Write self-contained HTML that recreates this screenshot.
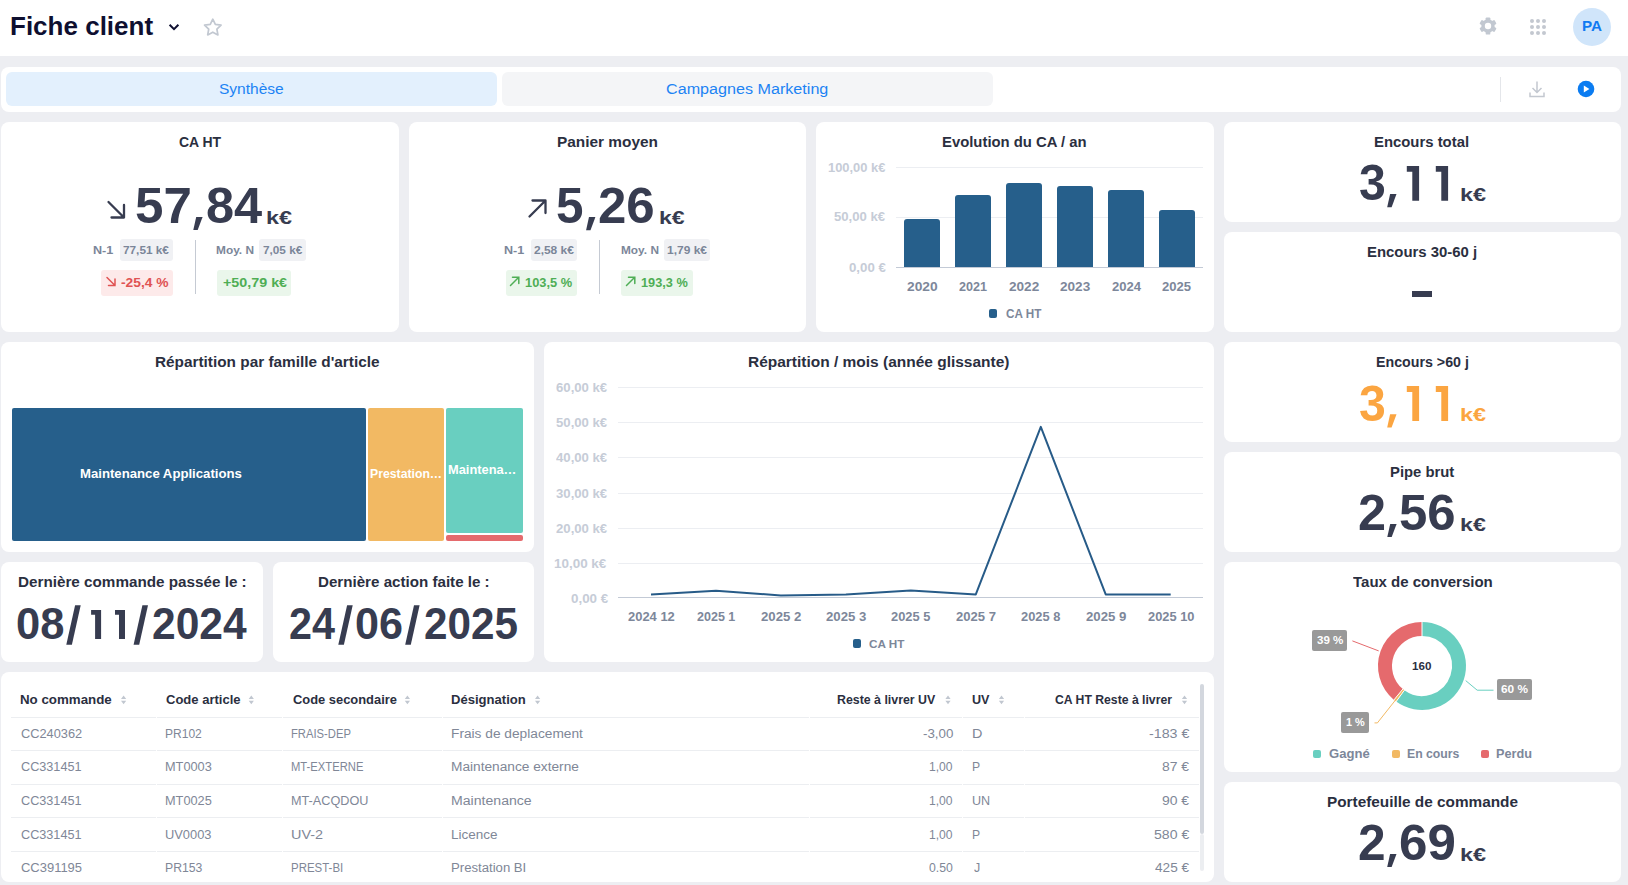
<!DOCTYPE html>
<html><head><meta charset="utf-8"><style>
html,body{margin:0;padding:0}
body{width:1628px;height:885px;background:#edeef2;position:relative;overflow:hidden;font-family:"Liberation Sans",sans-serif}
</style></head><body>
<div style="position:absolute;left:0px;top:0px;width:1628px;height:56px;background:#fff;border-radius:0px;"></div><svg style="position:absolute;left:168px;top:22px" width="12" height="10"><polyline points="1.6,2.8 6,7.2 10.4,2.8" fill="none" stroke="#0e0f30" stroke-width="2"/></svg><svg style="position:absolute;left:0;top:0" width="240" height="56"><polygon points="212.80,19.20 215.33,24.42 221.07,25.21 216.89,29.23 217.91,34.94 212.80,32.20 207.69,34.94 208.71,29.23 204.53,25.21 210.27,24.42" fill="none" stroke="#c2c8d1" stroke-width="1.7" stroke-linejoin="round"/></svg><svg style="position:absolute;left:1478px;top:16.4px" width="20" height="20"><g transform="translate(10 10)" fill="#c2c8d1"><circle r="6.7"/><rect x="-2.3" y="-8.6" width="4.6" height="5" rx="0.9" transform="rotate(0)"/><rect x="-2.3" y="-8.6" width="4.6" height="5" rx="0.9" transform="rotate(60)"/><rect x="-2.3" y="-8.6" width="4.6" height="5" rx="0.9" transform="rotate(120)"/><rect x="-2.3" y="-8.6" width="4.6" height="5" rx="0.9" transform="rotate(180)"/><rect x="-2.3" y="-8.6" width="4.6" height="5" rx="0.9" transform="rotate(240)"/><rect x="-2.3" y="-8.6" width="4.6" height="5" rx="0.9" transform="rotate(300)"/><circle r="3.2" fill="#fff"/></g></svg><div style="position:absolute;left:1530.0px;top:19.0px;width:4.4px;height:4.4px;background:#c3c8d0;border-radius:2.2px;"></div><div style="position:absolute;left:1530.0px;top:24.9px;width:4.4px;height:4.4px;background:#c3c8d0;border-radius:2.2px;"></div><div style="position:absolute;left:1530.0px;top:30.8px;width:4.4px;height:4.4px;background:#c3c8d0;border-radius:2.2px;"></div><div style="position:absolute;left:1535.9px;top:19.0px;width:4.4px;height:4.4px;background:#c3c8d0;border-radius:2.2px;"></div><div style="position:absolute;left:1535.9px;top:24.9px;width:4.4px;height:4.4px;background:#c3c8d0;border-radius:2.2px;"></div><div style="position:absolute;left:1535.9px;top:30.8px;width:4.4px;height:4.4px;background:#c3c8d0;border-radius:2.2px;"></div><div style="position:absolute;left:1541.8px;top:19.0px;width:4.4px;height:4.4px;background:#c3c8d0;border-radius:2.2px;"></div><div style="position:absolute;left:1541.8px;top:24.9px;width:4.4px;height:4.4px;background:#c3c8d0;border-radius:2.2px;"></div><div style="position:absolute;left:1541.8px;top:30.8px;width:4.4px;height:4.4px;background:#c3c8d0;border-radius:2.2px;"></div><div style="position:absolute;left:1573px;top:8px;width:38px;height:38px;background:#d0e5fa;border-radius:19px;"></div><div style="position:absolute;left:1px;top:67px;width:1620px;height:45px;background:#fff;border-radius:8px;"></div><div style="position:absolute;left:6px;top:72px;width:491px;height:34px;background:#e3f0fd;border-radius:6px;"></div><div style="position:absolute;left:502px;top:72px;width:491px;height:34px;background:#f4f5f7;border-radius:6px;"></div><div style="position:absolute;left:1500px;top:77px;width:1px;height:25px;background:#e4e6ea;border-radius:0px;"></div><svg style="position:absolute;left:1527px;top:79px" width="20" height="20"><path d="M10 2.5v11M5.5 9l4.5 4.5L14.5 9M3 13.5v4h14v-4" fill="none" stroke="#c3c8d0" stroke-width="1.5"/></svg><svg style="position:absolute;left:1576px;top:79px" width="20" height="20"><circle cx="10" cy="10" r="8.3" fill="#0b7cf1"/><path d="M7.8 6.4v7.2l5.6-3.6z" fill="#fff"/></svg><div style="position:absolute;left:1px;top:122px;width:398px;height:210px;background:#fff;border-radius:8px;"></div><div style="position:absolute;left:409px;top:122px;width:397px;height:210px;background:#fff;border-radius:8px;"></div><div style="position:absolute;left:816px;top:122px;width:398px;height:210px;background:#fff;border-radius:8px;"></div><div style="position:absolute;left:1224px;top:122px;width:397px;height:100px;background:#fff;border-radius:8px;"></div><div style="position:absolute;left:1224px;top:232px;width:397px;height:100px;background:#fff;border-radius:8px;"></div><div style="position:absolute;left:1224px;top:342px;width:397px;height:100px;background:#fff;border-radius:8px;"></div><div style="position:absolute;left:1224px;top:452px;width:397px;height:100px;background:#fff;border-radius:8px;"></div><div style="position:absolute;left:1224px;top:562px;width:397px;height:210px;background:#fff;border-radius:8px;"></div><div style="position:absolute;left:1224px;top:782px;width:397px;height:100px;background:#fff;border-radius:8px;"></div><div style="position:absolute;left:1px;top:342px;width:533px;height:210px;background:#fff;border-radius:8px;"></div><div style="position:absolute;left:544px;top:342px;width:670px;height:320px;background:#fff;border-radius:8px;"></div><div style="position:absolute;left:1px;top:562px;width:262px;height:100px;background:#fff;border-radius:8px;"></div><div style="position:absolute;left:273px;top:562px;width:261px;height:100px;background:#fff;border-radius:8px;"></div><div style="position:absolute;left:1px;top:672px;width:1213px;height:210px;background:#fff;border-radius:8px;"></div><svg style="position:absolute;left:100px;top:194px" width="32" height="30"><path d="M8.5 8 L24 23.5 M24 11 V23.5 H11.5" fill="none" stroke="#373c50" stroke-width="2.3" stroke-linecap="round" stroke-linejoin="round"/></svg><svg style="position:absolute;left:0;top:0;overflow:visible" width="1628" height="885"><polygon points="196.20,216.90 202.60,216.90 197.70,230.00 193.30,230.00" fill="#373c50"/></svg><div style="position:absolute;left:120px;top:239px;width:53px;height:21.6px;background:#f0f1f4;border-radius:3px;"></div><div style="position:absolute;left:195px;top:240px;width:1px;height:54px;background:#c5cad3;border-radius:0px;"></div><div style="position:absolute;left:259px;top:239px;width:47px;height:21.6px;background:#f0f1f4;border-radius:3px;"></div><div style="position:absolute;left:101px;top:270px;width:72px;height:25.7px;background:#fdeaea;border-radius:3px;"></div><svg style="position:absolute;left:100px;top:272px" width="20" height="20"><path d="M7 5.5 L15 13.5 M15 7 V13.5 H8.5" fill="none" stroke="#e05353" stroke-width="1.5" stroke-linecap="round"/></svg><div style="position:absolute;left:217px;top:270px;width:74px;height:25.7px;background:#eaf6eb;border-radius:3px;"></div><svg style="position:absolute;left:522px;top:194px" width="32" height="30"><path d="M7.5 22.5 L23 7 M10.5 6.5 H23.5 V19" fill="none" stroke="#373c50" stroke-width="2.3" stroke-linecap="round" stroke-linejoin="round"/></svg><svg style="position:absolute;left:0;top:0;overflow:visible" width="1628" height="885"><polygon points="589.00,217.10 595.40,217.10 590.50,230.20 586.10,230.20" fill="#373c50"/></svg><div style="position:absolute;left:531px;top:239px;width:46px;height:21.6px;background:#f0f1f4;border-radius:3px;"></div><div style="position:absolute;left:599px;top:240px;width:1px;height:54px;background:#c5cad3;border-radius:0px;"></div><div style="position:absolute;left:664px;top:239px;width:46px;height:21.6px;background:#f0f1f4;border-radius:3px;"></div><div style="position:absolute;left:506px;top:270px;width:71px;height:25.5px;background:#eaf6eb;border-radius:3px;"></div><svg style="position:absolute;left:505px;top:272px" width="20" height="20"><path d="M5.5 13.5 L13.5 5.5 M7.5 5.3 H13.8 V11.5" fill="none" stroke="#4fae55" stroke-width="1.5" stroke-linecap="round"/></svg><div style="position:absolute;left:621px;top:270px;width:72px;height:25.5px;background:#eaf6eb;border-radius:3px;"></div><svg style="position:absolute;left:620.7px;top:272px" width="20" height="20"><path d="M5.5 13.5 L13.5 5.5 M7.5 5.3 H13.8 V11.5" fill="none" stroke="#4fae55" stroke-width="1.5" stroke-linecap="round"/></svg><div style="position:absolute;left:896px;top:167px;width:307px;height:1px;background:#eceef2;border-radius:0px;"></div><div style="position:absolute;left:896px;top:217px;width:307px;height:1px;background:#eceef2;border-radius:0px;"></div><div style="position:absolute;left:896px;top:267px;width:307px;height:1px;background:#c3cad6;border-radius:0px;"></div><div style="position:absolute;left:904.2px;top:219px;width:35.7px;height:48.19999999999999px;background:#265f8b;border-radius:3px 3px 0 0px;"></div><div style="position:absolute;left:955px;top:195px;width:35.7px;height:72.19999999999999px;background:#265f8b;border-radius:3px 3px 0 0px;"></div><div style="position:absolute;left:1006px;top:183.1px;width:35.7px;height:84.1px;background:#265f8b;border-radius:3px 3px 0 0px;"></div><div style="position:absolute;left:1057px;top:186px;width:35.7px;height:81.19999999999999px;background:#265f8b;border-radius:3px 3px 0 0px;"></div><div style="position:absolute;left:1108px;top:190px;width:35.7px;height:77.19999999999999px;background:#265f8b;border-radius:3px 3px 0 0px;"></div><div style="position:absolute;left:1159.1px;top:210px;width:35.7px;height:57.19999999999999px;background:#265f8b;border-radius:3px 3px 0 0px;"></div><div style="position:absolute;left:988.5px;top:309.3px;width:8.5px;height:8.9px;background:#265f8b;border-radius:2px;"></div><svg style="position:absolute;left:0;top:0;overflow:visible" width="1628" height="885"><polygon points="1390.10,194.10 1396.50,194.10 1391.60,207.20 1387.20,207.20" fill="#373c50"/></svg><svg style="position:absolute;left:0;top:0" width="1628" height="885"><polygon points="1406.8,165.9 1419.1,165.9 1419.1,200.8 1412.3,200.8 1412.3,171.70000000000002 1406.8,171.70000000000002" fill="#373c50"/><polygon points="1435.8,165.9 1448.1,165.9 1448.1,200.8 1441.3,200.8 1441.3,171.70000000000002 1435.8,171.70000000000002" fill="#373c50"/></svg><div style="position:absolute;left:1411.6px;top:291px;width:20.6px;height:5.7px;background:#373c50;border-radius:0px;"></div><svg style="position:absolute;left:0;top:0;overflow:visible" width="1628" height="885"><polygon points="1390.10,414.30 1396.50,414.30 1391.60,427.40 1387.20,427.40" fill="#fba541"/></svg><svg style="position:absolute;left:0;top:0" width="1628" height="885"><polygon points="1406.8,386.1 1419.1,386.1 1419.1,421.0 1412.3,421.0 1412.3,391.90000000000003 1406.8,391.90000000000003" fill="#fba541"/><polygon points="1435.8,386.1 1448.1,386.1 1448.1,421.0 1441.3,421.0 1441.3,391.90000000000003 1435.8,391.90000000000003" fill="#fba541"/></svg><svg style="position:absolute;left:0;top:0;overflow:visible" width="1628" height="885"><polygon points="1390.20,523.90 1396.60,523.90 1391.70,537.00 1387.30,537.00" fill="#373c50"/></svg><svg style="position:absolute;left:0;top:0;overflow:visible" width="1628" height="885"><polygon points="1390.10,853.90 1396.50,853.90 1391.60,867.00 1387.20,867.00" fill="#373c50"/></svg><div style="position:absolute;left:12px;top:408px;width:354.2px;height:133px;background:#265f8b;border-radius:2px;"></div><div style="position:absolute;left:368.3px;top:408px;width:76px;height:133px;background:#f2b963;border-radius:2px;"></div><div style="position:absolute;left:446px;top:408px;width:77px;height:124.5px;background:#69cfc0;border-radius:2px;"></div><div style="position:absolute;left:446px;top:534.5px;width:77px;height:6.5px;background:#e56a6d;border-radius:2px;"></div><svg style="position:absolute;left:0;top:0;overflow:visible" width="1628" height="885"><polygon points="75.10,605.20 80.70,605.20 71.90,644.70 66.30,644.70" fill="#373c50"/></svg><svg style="position:absolute;left:0;top:0;overflow:visible" width="1628" height="885"><polygon points="91.10,609.90 101.10,609.90 101.10,639.10 95.10,639.10 95.10,614.70 91.10,614.70" fill="#373c50"/></svg><svg style="position:absolute;left:0;top:0;overflow:visible" width="1628" height="885"><polygon points="115.00,609.90 125.00,609.90 125.00,639.10 119.00,639.10 119.00,614.70 115.00,614.70" fill="#373c50"/></svg><svg style="position:absolute;left:0;top:0;overflow:visible" width="1628" height="885"><polygon points="142.40,605.20 148.00,605.20 139.20,644.70 133.60,644.70" fill="#373c50"/></svg><svg style="position:absolute;left:0;top:0;overflow:visible" width="1628" height="885"><polygon points="347.10,605.20 352.70,605.20 343.90,644.70 338.30,644.70" fill="#373c50"/></svg><svg style="position:absolute;left:0;top:0;overflow:visible" width="1628" height="885"><polygon points="414.00,605.20 419.60,605.20 410.80,644.70 405.20,644.70" fill="#373c50"/></svg><div style="position:absolute;left:618px;top:387px;width:585px;height:1px;background:#eceef2;border-radius:0px;"></div><div style="position:absolute;left:618px;top:422px;width:585px;height:1px;background:#eceef2;border-radius:0px;"></div><div style="position:absolute;left:618px;top:457px;width:585px;height:1px;background:#eceef2;border-radius:0px;"></div><div style="position:absolute;left:618px;top:493px;width:585px;height:1px;background:#eceef2;border-radius:0px;"></div><div style="position:absolute;left:618px;top:528px;width:585px;height:1px;background:#eceef2;border-radius:0px;"></div><div style="position:absolute;left:618px;top:563px;width:585px;height:1px;background:#eceef2;border-radius:0px;"></div><div style="position:absolute;left:618px;top:597px;width:585px;height:1px;background:#c3cad6;border-radius:0px;"></div><svg style="position:absolute;left:0;top:0" width="1628" height="885"><polyline points="651.0,594.5 716.0,590.8 780.9,595.4 845.9,594.4 910.8,590.6 975.8,594.4 1040.8,426.9 1105.7,594.4 1170.7,594.4" fill="none" stroke="#275b88" stroke-width="2" stroke-linejoin="round"/></svg><div style="position:absolute;left:852.6px;top:639px;width:8.5px;height:8.5px;background:#265f8b;border-radius:2px;"></div><svg style="position:absolute;left:0;top:0" width="1628" height="885"><path d="M1422.00 629.00 A37 37 0 1 1 1400.25 695.93" fill="none" stroke="#69cfc0" stroke-width="14"/><path d="M1400.25 695.93 A37 37 0 0 1 1398.42 694.51" fill="none" stroke="#f2b963" stroke-width="14"/><path d="M1398.42 694.51 A37 37 0 0 1 1422.00 629.00" fill="none" stroke="#e56a6d" stroke-width="14"/><line x1="1422.00" y1="637.00" x2="1422.00" y2="621.00" stroke="#fff" stroke-width="1"/><line x1="1404.95" y1="689.46" x2="1395.55" y2="702.41" stroke="#fff" stroke-width="1"/><line x1="1403.51" y1="688.34" x2="1393.32" y2="700.67" stroke="#fff" stroke-width="1"/><polyline points="1352.4,640.9 1378.7,650.9" fill="none" stroke="#e56a6d" stroke-width="1"/><polyline points="1465.7,680.6 1477.2,690.2 1493.5,690.2" fill="none" stroke="#69cfc0" stroke-width="1"/><polyline points="1403.3,690.2 1377.4,722.9 1374.5,722.9" fill="none" stroke="#f2b963" stroke-width="1"/></svg><div style="position:absolute;left:1312px;top:630.3px;width:35px;height:21px;background:#999999;border-radius:2px;"></div><div style="position:absolute;left:1497px;top:679.3px;width:35px;height:20.7px;background:#999999;border-radius:2px;"></div><div style="position:absolute;left:1341px;top:712.3px;width:27.7px;height:20.6px;background:#999999;border-radius:2px;"></div><div style="position:absolute;left:1312.7px;top:749.6px;width:8px;height:8px;background:#69cfc0;border-radius:2px;"></div><div style="position:absolute;left:1391.8px;top:749.6px;width:8px;height:8px;background:#f2b963;border-radius:2px;"></div><div style="position:absolute;left:1480.7px;top:749.6px;width:8px;height:8px;background:#e56a6d;border-radius:2px;"></div><svg style="position:absolute;left:0;top:0" width="1628" height="885"><path d="M121.0 698.9 L123.6 695.5 L126.2 698.9Z M121.0 700.8 L123.6 704.2 L126.2 700.8Z" fill="#c1c7d0"/><path d="M248.7 698.9 L251.3 695.5 L253.9 698.9Z M248.7 700.8 L251.3 704.2 L253.9 700.8Z" fill="#c1c7d0"/><path d="M404.8 698.9 L407.4 695.5 L410.0 698.9Z M404.8 700.8 L407.4 704.2 L410.0 700.8Z" fill="#c1c7d0"/><path d="M535.0 698.9 L537.6 695.5 L540.2 698.9Z M535.0 700.8 L537.6 704.2 L540.2 700.8Z" fill="#c1c7d0"/><path d="M945.4 698.9 L948.0 695.5 L950.6 698.9Z M945.4 700.8 L948.0 704.2 L950.6 700.8Z" fill="#c1c7d0"/><path d="M998.9 698.9 L1001.5 695.5 L1004.1 698.9Z M998.9 700.8 L1001.5 704.2 L1004.1 700.8Z" fill="#c1c7d0"/><path d="M1181.9 698.9 L1184.5 695.5 L1187.1 698.9Z M1181.9 700.8 L1184.5 704.2 L1187.1 700.8Z" fill="#c1c7d0"/></svg><div style="position:absolute;left:11px;top:717px;width:144.5px;height:1px;background:#eceef1;border-radius:0px;"></div><div style="position:absolute;left:156.5px;top:717px;width:125.0px;height:1px;background:#eceef1;border-radius:0px;"></div><div style="position:absolute;left:282.5px;top:717px;width:159.5px;height:1px;background:#eceef1;border-radius:0px;"></div><div style="position:absolute;left:443px;top:717px;width:366.4px;height:1px;background:#eceef1;border-radius:0px;"></div><div style="position:absolute;left:810.4px;top:717px;width:151.89999999999998px;height:1px;background:#eceef1;border-radius:0px;"></div><div style="position:absolute;left:963.3px;top:717px;width:60.40000000000009px;height:1px;background:#eceef1;border-radius:0px;"></div><div style="position:absolute;left:1024.7px;top:717px;width:174.29999999999995px;height:1px;background:#eceef1;border-radius:0px;"></div><div style="position:absolute;left:11px;top:750px;width:144.5px;height:1px;background:#eceef1;border-radius:0px;"></div><div style="position:absolute;left:156.5px;top:750px;width:125.0px;height:1px;background:#eceef1;border-radius:0px;"></div><div style="position:absolute;left:282.5px;top:750px;width:159.5px;height:1px;background:#eceef1;border-radius:0px;"></div><div style="position:absolute;left:443px;top:750px;width:366.4px;height:1px;background:#eceef1;border-radius:0px;"></div><div style="position:absolute;left:810.4px;top:750px;width:151.89999999999998px;height:1px;background:#eceef1;border-radius:0px;"></div><div style="position:absolute;left:963.3px;top:750px;width:60.40000000000009px;height:1px;background:#eceef1;border-radius:0px;"></div><div style="position:absolute;left:1024.7px;top:750px;width:174.29999999999995px;height:1px;background:#eceef1;border-radius:0px;"></div><div style="position:absolute;left:11px;top:784px;width:144.5px;height:1px;background:#eceef1;border-radius:0px;"></div><div style="position:absolute;left:156.5px;top:784px;width:125.0px;height:1px;background:#eceef1;border-radius:0px;"></div><div style="position:absolute;left:282.5px;top:784px;width:159.5px;height:1px;background:#eceef1;border-radius:0px;"></div><div style="position:absolute;left:443px;top:784px;width:366.4px;height:1px;background:#eceef1;border-radius:0px;"></div><div style="position:absolute;left:810.4px;top:784px;width:151.89999999999998px;height:1px;background:#eceef1;border-radius:0px;"></div><div style="position:absolute;left:963.3px;top:784px;width:60.40000000000009px;height:1px;background:#eceef1;border-radius:0px;"></div><div style="position:absolute;left:1024.7px;top:784px;width:174.29999999999995px;height:1px;background:#eceef1;border-radius:0px;"></div><div style="position:absolute;left:11px;top:817px;width:144.5px;height:1px;background:#eceef1;border-radius:0px;"></div><div style="position:absolute;left:156.5px;top:817px;width:125.0px;height:1px;background:#eceef1;border-radius:0px;"></div><div style="position:absolute;left:282.5px;top:817px;width:159.5px;height:1px;background:#eceef1;border-radius:0px;"></div><div style="position:absolute;left:443px;top:817px;width:366.4px;height:1px;background:#eceef1;border-radius:0px;"></div><div style="position:absolute;left:810.4px;top:817px;width:151.89999999999998px;height:1px;background:#eceef1;border-radius:0px;"></div><div style="position:absolute;left:963.3px;top:817px;width:60.40000000000009px;height:1px;background:#eceef1;border-radius:0px;"></div><div style="position:absolute;left:1024.7px;top:817px;width:174.29999999999995px;height:1px;background:#eceef1;border-radius:0px;"></div><div style="position:absolute;left:11px;top:851px;width:144.5px;height:1px;background:#eceef1;border-radius:0px;"></div><div style="position:absolute;left:156.5px;top:851px;width:125.0px;height:1px;background:#eceef1;border-radius:0px;"></div><div style="position:absolute;left:282.5px;top:851px;width:159.5px;height:1px;background:#eceef1;border-radius:0px;"></div><div style="position:absolute;left:443px;top:851px;width:366.4px;height:1px;background:#eceef1;border-radius:0px;"></div><div style="position:absolute;left:810.4px;top:851px;width:151.89999999999998px;height:1px;background:#eceef1;border-radius:0px;"></div><div style="position:absolute;left:963.3px;top:851px;width:60.40000000000009px;height:1px;background:#eceef1;border-radius:0px;"></div><div style="position:absolute;left:1024.7px;top:851px;width:174.29999999999995px;height:1px;background:#eceef1;border-radius:0px;"></div><div style="position:absolute;left:1200px;top:684px;width:4px;height:150px;background:#d3d7de;border-radius:2px;"></div><div style="position:absolute;left:1200px;top:834px;width:4px;height:37px;background:#eceef1;border-radius:2px;"></div><div style="position:absolute;left:10.42px;top:13.93px;font:700 25px/1 'Liberation Sans', sans-serif;letter-spacing:0.000px;white-space:nowrap;color:#0e0f30;transform:scaleX(1.0404);transform-origin:0 0;">Fiche client</div><div style="position:absolute;left:1581.91px;top:19.25px;font:700 14px/1 'Liberation Sans', sans-serif;letter-spacing:0.000px;white-space:nowrap;color:#117af2;transform:scaleX(1.0882);transform-origin:0 0;">PA</div><div style="position:absolute;left:218.89px;top:81.95px;font:400 14px/1 'Liberation Sans', sans-serif;letter-spacing:0.000px;white-space:nowrap;color:#1c83f4;transform:scaleX(1.1088);transform-origin:0 0;">Synthèse</div><div style="position:absolute;left:666.25px;top:81.95px;font:400 14px/1 'Liberation Sans', sans-serif;letter-spacing:0.000px;white-space:nowrap;color:#1c83f4;transform:scaleX(1.1525);transform-origin:0 0;">Campagnes Marketing</div><div style="position:absolute;left:179.00px;top:135.15px;font:700 14px/1 'Liberation Sans', sans-serif;letter-spacing:0.000px;white-space:nowrap;color:#2b2f3f;transform:scaleX(0.9976);transform-origin:0 0;">CA HT</div><div style="position:absolute;left:134.56px;top:181.26px;font:700 50px/1 'Liberation Sans', sans-serif;letter-spacing:0.000px;white-space:nowrap;color:#373c50;transform:scaleX(1.0212);transform-origin:0 0;">57</div><div style="position:absolute;left:205.89px;top:181.26px;font:700 50px/1 'Liberation Sans', sans-serif;letter-spacing:0.000px;white-space:nowrap;color:#373c50;transform:scaleX(1.0111);transform-origin:0 0;">84</div><div style="position:absolute;left:265.77px;top:207.51px;font:700 19px/1 'Liberation Sans', sans-serif;letter-spacing:0.000px;white-space:nowrap;color:#373c50;transform:scaleX(1.2300);transform-origin:0 0;">k€</div><div style="position:absolute;left:92.65px;top:244.69px;font:700 11px/1 'Liberation Sans', sans-serif;letter-spacing:0.000px;white-space:nowrap;color:#7b8699;transform:scaleX(1.1471);transform-origin:0 0;">N-1</div><div style="position:absolute;left:123.40px;top:244.69px;font:700 11px/1 'Liberation Sans', sans-serif;letter-spacing:0.000px;white-space:nowrap;color:#7b8699;transform:scaleX(1.0721);transform-origin:0 0;">77,51 k€</div><div style="position:absolute;left:216.32px;top:244.69px;font:700 11px/1 'Liberation Sans', sans-serif;letter-spacing:0.000px;white-space:nowrap;color:#7b8699;transform:scaleX(1.0794);transform-origin:0 0;">Moy. N</div><div style="position:absolute;left:263.00px;top:244.69px;font:700 11px/1 'Liberation Sans', sans-serif;letter-spacing:0.000px;white-space:nowrap;color:#7b8699;transform:scaleX(1.0703);transform-origin:0 0;">7,05 k€</div><div style="position:absolute;left:120.60px;top:276.64px;font:700 12px/1 'Liberation Sans', sans-serif;letter-spacing:0.000px;white-space:nowrap;color:#e05353;transform:scaleX(1.1488);transform-origin:0 0;">-25,4 %</div><div style="position:absolute;left:222.70px;top:276.64px;font:700 12px/1 'Liberation Sans', sans-serif;letter-spacing:0.000px;white-space:nowrap;color:#4fae55;transform:scaleX(1.1925);transform-origin:0 0;">+50,79 k€</div><div style="position:absolute;left:556.80px;top:135.15px;font:700 14px/1 'Liberation Sans', sans-serif;letter-spacing:0.000px;white-space:nowrap;color:#2b2f3f;transform:scaleX(1.1000);transform-origin:0 0;">Panier moyen</div><div style="position:absolute;left:556.42px;top:181.47px;font:700 50px/1 'Liberation Sans', sans-serif;letter-spacing:0.000px;white-space:nowrap;color:#373c50;transform:scaleX(0.9880);transform-origin:0 0;">5</div><div style="position:absolute;left:597.96px;top:181.47px;font:700 50px/1 'Liberation Sans', sans-serif;letter-spacing:0.000px;white-space:nowrap;color:#373c50;transform:scaleX(1.0192);transform-origin:0 0;">26</div><div style="position:absolute;left:658.68px;top:207.61px;font:700 19px/1 'Liberation Sans', sans-serif;letter-spacing:0.000px;white-space:nowrap;color:#373c50;transform:scaleX(1.2150);transform-origin:0 0;">k€</div><div style="position:absolute;left:503.56px;top:244.59px;font:700 11px/1 'Liberation Sans', sans-serif;letter-spacing:0.000px;white-space:nowrap;color:#7b8699;transform:scaleX(1.1412);transform-origin:0 0;">N-1</div><div style="position:absolute;left:533.90px;top:244.59px;font:700 11px/1 'Liberation Sans', sans-serif;letter-spacing:0.000px;white-space:nowrap;color:#7b8699;transform:scaleX(1.0865);transform-origin:0 0;">2,58 k€</div><div style="position:absolute;left:620.52px;top:244.59px;font:700 11px/1 'Liberation Sans', sans-serif;letter-spacing:0.000px;white-space:nowrap;color:#7b8699;transform:scaleX(1.0765);transform-origin:0 0;">Moy. N</div><div style="position:absolute;left:666.61px;top:244.59px;font:700 11px/1 'Liberation Sans', sans-serif;letter-spacing:0.000px;white-space:nowrap;color:#7b8699;transform:scaleX(1.0889);transform-origin:0 0;">1,79 k€</div><div style="position:absolute;left:524.73px;top:276.54px;font:700 12px/1 'Liberation Sans', sans-serif;letter-spacing:0.000px;white-space:nowrap;color:#4fae55;transform:scaleX(1.0698);transform-origin:0 0;">103,5 %</div><div style="position:absolute;left:640.54px;top:276.54px;font:700 12px/1 'Liberation Sans', sans-serif;letter-spacing:0.000px;white-space:nowrap;color:#4fae55;transform:scaleX(1.0605);transform-origin:0 0;">193,3 %</div><div style="position:absolute;left:941.94px;top:135.15px;font:700 14px/1 'Liberation Sans', sans-serif;letter-spacing:0.000px;white-space:nowrap;color:#2b2f3f;transform:scaleX(1.0607);transform-origin:0 0;">Evolution du CA / an</div><div style="position:absolute;left:827.92px;top:161.64px;font:700 12px/1 'Liberation Sans', sans-serif;letter-spacing:0.000px;white-space:nowrap;color:#c6ccd7;transform:scaleX(1.0750);transform-origin:0 0;">100,00 k€</div><div style="position:absolute;left:833.80px;top:211.44px;font:700 12px/1 'Liberation Sans', sans-serif;letter-spacing:0.000px;white-space:nowrap;color:#c6ccd7;transform:scaleX(1.0935);transform-origin:0 0;">50,00 k€</div><div style="position:absolute;left:848.90px;top:261.64px;font:700 12px/1 'Liberation Sans', sans-serif;letter-spacing:0.000px;white-space:nowrap;color:#c6ccd7;transform:scaleX(1.1030);transform-origin:0 0;">0,00 €</div><div style="position:absolute;left:907.40px;top:280.94px;font:700 12px/1 'Liberation Sans', sans-serif;letter-spacing:0.000px;white-space:nowrap;color:#7d879a;transform:scaleX(1.1462);transform-origin:0 0;">2020</div><div style="position:absolute;left:958.50px;top:280.94px;font:700 12px/1 'Liberation Sans', sans-serif;letter-spacing:0.000px;white-space:nowrap;color:#7d879a;transform:scaleX(1.0481);transform-origin:0 0;">2021</div><div style="position:absolute;left:1009.30px;top:280.94px;font:700 12px/1 'Liberation Sans', sans-serif;letter-spacing:0.000px;white-space:nowrap;color:#7d879a;transform:scaleX(1.1308);transform-origin:0 0;">2022</div><div style="position:absolute;left:1060.40px;top:280.94px;font:700 12px/1 'Liberation Sans', sans-serif;letter-spacing:0.000px;white-space:nowrap;color:#7d879a;transform:scaleX(1.1308);transform-origin:0 0;">2023</div><div style="position:absolute;left:1111.50px;top:280.94px;font:700 12px/1 'Liberation Sans', sans-serif;letter-spacing:0.000px;white-space:nowrap;color:#7d879a;transform:scaleX(1.0889);transform-origin:0 0;">2024</div><div style="position:absolute;left:1162.40px;top:280.94px;font:700 12px/1 'Liberation Sans', sans-serif;letter-spacing:0.000px;white-space:nowrap;color:#7d879a;transform:scaleX(1.0889);transform-origin:0 0;">2025</div><div style="position:absolute;left:1005.70px;top:308.04px;font:700 12px/1 'Liberation Sans', sans-serif;letter-spacing:0.000px;white-space:nowrap;color:#7d879a;transform:scaleX(0.9750);transform-origin:0 0;">CA HT</div><div style="position:absolute;left:1374.34px;top:135.15px;font:700 14px/1 'Liberation Sans', sans-serif;letter-spacing:0.000px;white-space:nowrap;color:#2b2f3f;transform:scaleX(1.0625);transform-origin:0 0;">Encours total</div><div style="position:absolute;left:1359.14px;top:158.47px;font:700 50px/1 'Liberation Sans', sans-serif;letter-spacing:0.000px;white-space:nowrap;color:#373c50;transform:scaleX(0.9640);transform-origin:0 0;">3</div><div style="position:absolute;left:1460.07px;top:184.71px;font:700 19px/1 'Liberation Sans', sans-serif;letter-spacing:0.000px;white-space:nowrap;color:#373c50;transform:scaleX(1.2350);transform-origin:0 0;">k€</div><div style="position:absolute;left:1366.84px;top:245.15px;font:700 14px/1 'Liberation Sans', sans-serif;letter-spacing:0.000px;white-space:nowrap;color:#2b2f3f;transform:scaleX(1.0647);transform-origin:0 0;">Encours 30-60 j</div><div style="position:absolute;left:1375.88px;top:354.95px;font:700 14px/1 'Liberation Sans', sans-serif;letter-spacing:0.000px;white-space:nowrap;color:#2b2f3f;transform:scaleX(1.0156);transform-origin:0 0;">Encours &gt;60 j</div><div style="position:absolute;left:1359.14px;top:378.67px;font:700 50px/1 'Liberation Sans', sans-serif;letter-spacing:0.000px;white-space:nowrap;color:#fba541;transform:scaleX(0.9640);transform-origin:0 0;">3</div><div style="position:absolute;left:1460.07px;top:404.91px;font:700 19px/1 'Liberation Sans', sans-serif;letter-spacing:0.000px;white-space:nowrap;color:#fba541;transform:scaleX(1.2350);transform-origin:0 0;">k€</div><div style="position:absolute;left:1389.54px;top:465.15px;font:700 14px/1 'Liberation Sans', sans-serif;letter-spacing:0.000px;white-space:nowrap;color:#2b2f3f;transform:scaleX(1.0583);transform-origin:0 0;">Pipe brut</div><div style="position:absolute;left:1358.08px;top:488.27px;font:700 50px/1 'Liberation Sans', sans-serif;letter-spacing:0.000px;white-space:nowrap;color:#373c50;transform:scaleX(1.0083);transform-origin:0 0;">2</div><div style="position:absolute;left:1398.77px;top:488.27px;font:700 50px/1 'Liberation Sans', sans-serif;letter-spacing:0.000px;white-space:nowrap;color:#373c50;transform:scaleX(1.0173);transform-origin:0 0;">56</div><div style="position:absolute;left:1460.38px;top:514.51px;font:700 19px/1 'Liberation Sans', sans-serif;letter-spacing:0.000px;white-space:nowrap;color:#373c50;transform:scaleX(1.2200);transform-origin:0 0;">k€</div><div style="position:absolute;left:1326.60px;top:795.15px;font:700 14px/1 'Liberation Sans', sans-serif;letter-spacing:0.000px;white-space:nowrap;color:#2b2f3f;transform:scaleX(1.0960);transform-origin:0 0;">Portefeuille de commande</div><div style="position:absolute;left:1358.22px;top:818.26px;font:700 50px/1 'Liberation Sans', sans-serif;letter-spacing:0.000px;white-space:nowrap;color:#373c50;transform:scaleX(0.9917);transform-origin:0 0;">2</div><div style="position:absolute;left:1399.16px;top:818.26px;font:700 50px/1 'Liberation Sans', sans-serif;letter-spacing:0.000px;white-space:nowrap;color:#373c50;transform:scaleX(1.0212);transform-origin:0 0;">69</div><div style="position:absolute;left:1459.97px;top:844.51px;font:700 19px/1 'Liberation Sans', sans-serif;letter-spacing:0.000px;white-space:nowrap;color:#373c50;transform:scaleX(1.2350);transform-origin:0 0;">k€</div><div style="position:absolute;left:154.60px;top:355.15px;font:700 14px/1 'Liberation Sans', sans-serif;letter-spacing:0.000px;white-space:nowrap;color:#2b2f3f;transform:scaleX(1.0961);transform-origin:0 0;">Répartition par famille d&#x27;article</div><div style="position:absolute;left:80.00px;top:468.04px;font:700 12px/1 'Liberation Sans', sans-serif;letter-spacing:0.000px;white-space:nowrap;color:#fff;transform:scaleX(1.0966);transform-origin:0 0;">Maintenance Applications</div><div style="position:absolute;left:369.58px;top:468.04px;font:700 12px/1 'Liberation Sans', sans-serif;letter-spacing:0.000px;white-space:nowrap;color:#fff;transform:scaleX(1.0203);transform-origin:0 0;">Prestation…</div><div style="position:absolute;left:447.53px;top:463.84px;font:700 12px/1 'Liberation Sans', sans-serif;letter-spacing:0.000px;white-space:nowrap;color:#fff;transform:scaleX(1.0694);transform-origin:0 0;">Maintena…</div><div style="position:absolute;left:17.91px;top:575.15px;font:700 14px/1 'Liberation Sans', sans-serif;letter-spacing:0.000px;white-space:nowrap;color:#2b2f3f;transform:scaleX(1.0885);transform-origin:0 0;">Dernière commande passée le :</div><div style="position:absolute;left:15.62px;top:601.85px;font:700 44px/1 'Liberation Sans', sans-serif;letter-spacing:0.000px;white-space:nowrap;color:#373c50;transform:scaleX(0.9891);transform-origin:0 0;">08</div><div style="position:absolute;left:152.23px;top:601.85px;font:700 44px/1 'Liberation Sans', sans-serif;letter-spacing:0.000px;white-space:nowrap;color:#373c50;transform:scaleX(0.9670);transform-origin:0 0;">2024</div><div style="position:absolute;left:317.92px;top:575.15px;font:700 14px/1 'Liberation Sans', sans-serif;letter-spacing:0.000px;white-space:nowrap;color:#2b2f3f;transform:scaleX(1.0815);transform-origin:0 0;">Dernière action faite le :</div><div style="position:absolute;left:289.06px;top:601.85px;font:700 44px/1 'Liberation Sans', sans-serif;letter-spacing:0.000px;white-space:nowrap;color:#373c50;transform:scaleX(0.9396);transform-origin:0 0;">24</div><div style="position:absolute;left:354.74px;top:601.85px;font:700 44px/1 'Liberation Sans', sans-serif;letter-spacing:0.000px;white-space:nowrap;color:#373c50;transform:scaleX(0.9804);transform-origin:0 0;">06</div><div style="position:absolute;left:424.24px;top:601.85px;font:700 44px/1 'Liberation Sans', sans-serif;letter-spacing:0.000px;white-space:nowrap;color:#373c50;transform:scaleX(0.9604);transform-origin:0 0;">2025</div><div style="position:absolute;left:747.79px;top:355.15px;font:700 14px/1 'Liberation Sans', sans-serif;letter-spacing:0.000px;white-space:nowrap;color:#2b2f3f;transform:scaleX(1.1055);transform-origin:0 0;">Répartition / mois (année glissante)</div><div style="position:absolute;left:555.60px;top:381.94px;font:700 12px/1 'Liberation Sans', sans-serif;letter-spacing:0.000px;white-space:nowrap;color:#c6ccd7;transform:scaleX(1.0957);transform-origin:0 0;">60,00 k€</div><div style="position:absolute;left:555.60px;top:416.94px;font:700 12px/1 'Liberation Sans', sans-serif;letter-spacing:0.000px;white-space:nowrap;color:#c6ccd7;transform:scaleX(1.0957);transform-origin:0 0;">50,00 k€</div><div style="position:absolute;left:555.60px;top:451.94px;font:700 12px/1 'Liberation Sans', sans-serif;letter-spacing:0.000px;white-space:nowrap;color:#c6ccd7;transform:scaleX(1.0957);transform-origin:0 0;">40,00 k€</div><div style="position:absolute;left:555.60px;top:487.94px;font:700 12px/1 'Liberation Sans', sans-serif;letter-spacing:0.000px;white-space:nowrap;color:#c6ccd7;transform:scaleX(1.0957);transform-origin:0 0;">30,00 k€</div><div style="position:absolute;left:555.60px;top:522.94px;font:700 12px/1 'Liberation Sans', sans-serif;letter-spacing:0.000px;white-space:nowrap;color:#c6ccd7;transform:scaleX(1.0957);transform-origin:0 0;">20,00 k€</div><div style="position:absolute;left:554.48px;top:557.94px;font:700 12px/1 'Liberation Sans', sans-serif;letter-spacing:0.000px;white-space:nowrap;color:#c6ccd7;transform:scaleX(1.1200);transform-origin:0 0;">10,00 k€</div><div style="position:absolute;left:570.70px;top:592.64px;font:700 12px/1 'Liberation Sans', sans-serif;letter-spacing:0.000px;white-space:nowrap;color:#c6ccd7;transform:scaleX(1.1152);transform-origin:0 0;">0,00 €</div><div style="position:absolute;left:627.80px;top:610.84px;font:700 12px/1 'Liberation Sans', sans-serif;letter-spacing:0.000px;white-space:nowrap;color:#7d879a;transform:scaleX(1.0791);transform-origin:0 0;">2024 12</div><div style="position:absolute;left:696.66px;top:610.84px;font:700 12px/1 'Liberation Sans', sans-serif;letter-spacing:0.000px;white-space:nowrap;color:#7d879a;transform:scaleX(1.0432);transform-origin:0 0;">2025 1</div><div style="position:absolute;left:761.12px;top:610.84px;font:700 12px/1 'Liberation Sans', sans-serif;letter-spacing:0.000px;white-space:nowrap;color:#7d879a;transform:scaleX(1.1000);transform-origin:0 0;">2025 2</div><div style="position:absolute;left:826.08px;top:610.84px;font:700 12px/1 'Liberation Sans', sans-serif;letter-spacing:0.000px;white-space:nowrap;color:#7d879a;transform:scaleX(1.1000);transform-origin:0 0;">2025 3</div><div style="position:absolute;left:891.04px;top:610.84px;font:700 12px/1 'Liberation Sans', sans-serif;letter-spacing:0.000px;white-space:nowrap;color:#7d879a;transform:scaleX(1.0703);transform-origin:0 0;">2025 5</div><div style="position:absolute;left:956.20px;top:610.84px;font:700 12px/1 'Liberation Sans', sans-serif;letter-spacing:0.000px;white-space:nowrap;color:#7d879a;transform:scaleX(1.0889);transform-origin:0 0;">2025 7</div><div style="position:absolute;left:1020.96px;top:610.84px;font:700 12px/1 'Liberation Sans', sans-serif;letter-spacing:0.000px;white-space:nowrap;color:#7d879a;transform:scaleX(1.0703);transform-origin:0 0;">2025 8</div><div style="position:absolute;left:1085.92px;top:610.84px;font:700 12px/1 'Liberation Sans', sans-serif;letter-spacing:0.000px;white-space:nowrap;color:#7d879a;transform:scaleX(1.1000);transform-origin:0 0;">2025 9</div><div style="position:absolute;left:1147.68px;top:610.84px;font:700 12px/1 'Liberation Sans', sans-serif;letter-spacing:0.000px;white-space:nowrap;color:#7d879a;transform:scaleX(1.0698);transform-origin:0 0;">2025 10</div><div style="position:absolute;left:869.00px;top:638.56px;font:700 11.5px/1 'Liberation Sans', sans-serif;letter-spacing:0.000px;white-space:nowrap;color:#7d879a;transform:scaleX(1.0200);transform-origin:0 0;">CA HT</div><div style="position:absolute;left:1352.90px;top:575.15px;font:700 14px/1 'Liberation Sans', sans-serif;letter-spacing:0.000px;white-space:nowrap;color:#2b2f3f;transform:scaleX(1.0715);transform-origin:0 0;">Taux de conversion</div><div style="position:absolute;left:1412.49px;top:661.06px;font:700 11.5px/1 'Liberation Sans', sans-serif;letter-spacing:0.000px;white-space:nowrap;color:#2b2f3f;transform:scaleX(1.0111);transform-origin:0 0;">160</div><div style="position:absolute;left:1316.50px;top:635.39px;font:700 11px/1 'Liberation Sans', sans-serif;letter-spacing:0.000px;white-space:nowrap;color:#fff;transform:scaleX(1.0520);transform-origin:0 0;">39 %</div><div style="position:absolute;left:1501.20px;top:684.39px;font:700 11px/1 'Liberation Sans', sans-serif;letter-spacing:0.000px;white-space:nowrap;color:#fff;transform:scaleX(1.0760);transform-origin:0 0;">60 %</div><div style="position:absolute;left:1345.61px;top:717.39px;font:700 11px/1 'Liberation Sans', sans-serif;letter-spacing:0.000px;white-space:nowrap;color:#fff;transform:scaleX(0.9944);transform-origin:0 0;">1 %</div><div style="position:absolute;left:1329.40px;top:747.64px;font:700 12px/1 'Liberation Sans', sans-serif;letter-spacing:0.000px;white-space:nowrap;color:#7d879a;transform:scaleX(1.0892);transform-origin:0 0;">Gagné</div><div style="position:absolute;left:1406.98px;top:747.64px;font:700 12px/1 'Liberation Sans', sans-serif;letter-spacing:0.000px;white-space:nowrap;color:#7d879a;transform:scaleX(1.0200);transform-origin:0 0;">En cours</div><div style="position:absolute;left:1496.34px;top:747.64px;font:700 12px/1 'Liberation Sans', sans-serif;letter-spacing:0.000px;white-space:nowrap;color:#7d879a;transform:scaleX(1.0576);transform-origin:0 0;">Perdu</div><div style="position:absolute;left:20.39px;top:694.04px;font:700 12px/1 'Liberation Sans', sans-serif;letter-spacing:0.000px;white-space:nowrap;color:#2b2f3f;transform:scaleX(1.1099);transform-origin:0 0;">No commande</div><div style="position:absolute;left:166.20px;top:694.04px;font:700 12px/1 'Liberation Sans', sans-serif;letter-spacing:0.000px;white-space:nowrap;color:#2b2f3f;transform:scaleX(1.0853);transform-origin:0 0;">Code article</div><div style="position:absolute;left:292.80px;top:694.04px;font:700 12px/1 'Liberation Sans', sans-serif;letter-spacing:0.000px;white-space:nowrap;color:#2b2f3f;transform:scaleX(1.0750);transform-origin:0 0;">Code secondaire</div><div style="position:absolute;left:451.31px;top:694.04px;font:700 12px/1 'Liberation Sans', sans-serif;letter-spacing:0.000px;white-space:nowrap;color:#2b2f3f;transform:scaleX(1.0881);transform-origin:0 0;">Désignation</div><div style="position:absolute;left:836.77px;top:694.04px;font:700 12px/1 'Liberation Sans', sans-serif;letter-spacing:0.000px;white-space:nowrap;color:#2b2f3f;transform:scaleX(1.0305);transform-origin:0 0;">Reste à livrer UV</div><div style="position:absolute;left:971.95px;top:694.04px;font:700 12px/1 'Liberation Sans', sans-serif;letter-spacing:0.000px;white-space:nowrap;color:#2b2f3f;transform:scaleX(1.0500);transform-origin:0 0;">UV</div><div style="position:absolute;left:1055.00px;top:694.04px;font:700 12px/1 'Liberation Sans', sans-serif;letter-spacing:0.000px;white-space:nowrap;color:#2b2f3f;transform:scaleX(1.0174);transform-origin:0 0;">CA HT Reste à livrer</div><div style="position:absolute;left:21.40px;top:727.84px;font:400 12px/1 'Liberation Sans', sans-serif;letter-spacing:0.000px;white-space:nowrap;color:#808797;transform:scaleX(1.0649);transform-origin:0 0;">CC240362</div><div style="position:absolute;left:165.10px;top:727.84px;font:400 12px/1 'Liberation Sans', sans-serif;letter-spacing:0.000px;white-space:nowrap;color:#808797;transform:scaleX(1.0029);transform-origin:0 0;">PR102</div><div style="position:absolute;left:291.46px;top:727.84px;font:400 12px/1 'Liberation Sans', sans-serif;letter-spacing:0.000px;white-space:nowrap;color:#808797;transform:scaleX(0.9365);transform-origin:0 0;">FRAIS-DEP</div><div style="position:absolute;left:451.16px;top:727.84px;font:400 12px/1 'Liberation Sans', sans-serif;letter-spacing:0.000px;white-space:nowrap;color:#808797;transform:scaleX(1.1430);transform-origin:0 0;">Frais de deplacement</div><div style="position:absolute;left:922.70px;top:727.84px;font:400 12px/1 'Liberation Sans', sans-serif;letter-spacing:0.000px;white-space:nowrap;color:#808797;transform:scaleX(1.1111);transform-origin:0 0;">-3,00</div><div style="position:absolute;left:971.80px;top:727.84px;font:400 12px/1 'Liberation Sans', sans-serif;letter-spacing:0.000px;white-space:nowrap;color:#808797;transform:scaleX(1.2000);transform-origin:0 0;">D</div><div style="position:absolute;left:1148.60px;top:727.84px;font:400 12px/1 'Liberation Sans', sans-serif;letter-spacing:0.000px;white-space:nowrap;color:#808797;transform:scaleX(1.1882);transform-origin:0 0;">-183 €</div><div style="position:absolute;left:21.40px;top:760.84px;font:400 12px/1 'Liberation Sans', sans-serif;letter-spacing:0.000px;white-space:nowrap;color:#808797;transform:scaleX(1.0544);transform-origin:0 0;">CC331451</div><div style="position:absolute;left:165.04px;top:760.84px;font:400 12px/1 'Liberation Sans', sans-serif;letter-spacing:0.000px;white-space:nowrap;color:#808797;transform:scaleX(1.0628);transform-origin:0 0;">MT0003</div><div style="position:absolute;left:291.46px;top:760.84px;font:400 12px/1 'Liberation Sans', sans-serif;letter-spacing:0.000px;white-space:nowrap;color:#808797;transform:scaleX(0.9368);transform-origin:0 0;">MT-EXTERNE</div><div style="position:absolute;left:451.16px;top:760.84px;font:400 12px/1 'Liberation Sans', sans-serif;letter-spacing:0.000px;white-space:nowrap;color:#808797;transform:scaleX(1.1414);transform-origin:0 0;">Maintenance externe</div><div style="position:absolute;left:929.49px;top:760.84px;font:400 12px/1 'Liberation Sans', sans-serif;letter-spacing:0.000px;white-space:nowrap;color:#808797;transform:scaleX(1.0091);transform-origin:0 0;">1,00</div><div style="position:absolute;left:971.99px;top:760.84px;font:400 12px/1 'Liberation Sans', sans-serif;letter-spacing:0.000px;white-space:nowrap;color:#808797;transform:scaleX(1.0143);transform-origin:0 0;">P</div><div style="position:absolute;left:1162.30px;top:760.84px;font:400 12px/1 'Liberation Sans', sans-serif;letter-spacing:0.000px;white-space:nowrap;color:#808797;transform:scaleX(1.1609);transform-origin:0 0;">87 €</div><div style="position:absolute;left:21.40px;top:794.84px;font:400 12px/1 'Liberation Sans', sans-serif;letter-spacing:0.000px;white-space:nowrap;color:#808797;transform:scaleX(1.0544);transform-origin:0 0;">CC331451</div><div style="position:absolute;left:165.04px;top:794.84px;font:400 12px/1 'Liberation Sans', sans-serif;letter-spacing:0.000px;white-space:nowrap;color:#808797;transform:scaleX(1.0628);transform-origin:0 0;">MT0025</div><div style="position:absolute;left:291.34px;top:794.84px;font:400 12px/1 'Liberation Sans', sans-serif;letter-spacing:0.000px;white-space:nowrap;color:#808797;transform:scaleX(1.0556);transform-origin:0 0;">MT-ACQDOU</div><div style="position:absolute;left:451.13px;top:794.84px;font:400 12px/1 'Liberation Sans', sans-serif;letter-spacing:0.000px;white-space:nowrap;color:#808797;transform:scaleX(1.1746);transform-origin:0 0;">Maintenance</div><div style="position:absolute;left:929.49px;top:794.84px;font:400 12px/1 'Liberation Sans', sans-serif;letter-spacing:0.000px;white-space:nowrap;color:#808797;transform:scaleX(1.0091);transform-origin:0 0;">1,00</div><div style="position:absolute;left:971.95px;top:794.84px;font:400 12px/1 'Liberation Sans', sans-serif;letter-spacing:0.000px;white-space:nowrap;color:#808797;transform:scaleX(1.0500);transform-origin:0 0;">UN</div><div style="position:absolute;left:1162.30px;top:794.84px;font:400 12px/1 'Liberation Sans', sans-serif;letter-spacing:0.000px;white-space:nowrap;color:#808797;transform:scaleX(1.1609);transform-origin:0 0;">90 €</div><div style="position:absolute;left:21.40px;top:829.04px;font:400 12px/1 'Liberation Sans', sans-serif;letter-spacing:0.000px;white-space:nowrap;color:#808797;transform:scaleX(1.0544);transform-origin:0 0;">CC331451</div><div style="position:absolute;left:165.03px;top:829.04px;font:400 12px/1 'Liberation Sans', sans-serif;letter-spacing:0.000px;white-space:nowrap;color:#808797;transform:scaleX(1.0714);transform-origin:0 0;">UV0003</div><div style="position:absolute;left:291.20px;top:829.04px;font:400 12px/1 'Liberation Sans', sans-serif;letter-spacing:0.000px;white-space:nowrap;color:#808797;transform:scaleX(1.2000);transform-origin:0 0;">UV-2</div><div style="position:absolute;left:451.18px;top:829.04px;font:400 12px/1 'Liberation Sans', sans-serif;letter-spacing:0.000px;white-space:nowrap;color:#808797;transform:scaleX(1.1250);transform-origin:0 0;">Licence</div><div style="position:absolute;left:929.49px;top:829.04px;font:400 12px/1 'Liberation Sans', sans-serif;letter-spacing:0.000px;white-space:nowrap;color:#808797;transform:scaleX(1.0091);transform-origin:0 0;">1,00</div><div style="position:absolute;left:971.99px;top:829.04px;font:400 12px/1 'Liberation Sans', sans-serif;letter-spacing:0.000px;white-space:nowrap;color:#808797;transform:scaleX(1.0143);transform-origin:0 0;">P</div><div style="position:absolute;left:1153.83px;top:829.04px;font:400 12px/1 'Liberation Sans', sans-serif;letter-spacing:0.000px;white-space:nowrap;color:#808797;transform:scaleX(1.1724);transform-origin:0 0;">580 €</div><div style="position:absolute;left:21.40px;top:862.04px;font:400 12px/1 'Liberation Sans', sans-serif;letter-spacing:0.000px;white-space:nowrap;color:#808797;transform:scaleX(1.0804);transform-origin:0 0;">CC391195</div><div style="position:absolute;left:165.08px;top:862.04px;font:400 12px/1 'Liberation Sans', sans-serif;letter-spacing:0.000px;white-space:nowrap;color:#808797;transform:scaleX(1.0171);transform-origin:0 0;">PR153</div><div style="position:absolute;left:291.45px;top:862.04px;font:400 12px/1 'Liberation Sans', sans-serif;letter-spacing:0.000px;white-space:nowrap;color:#808797;transform:scaleX(0.9547);transform-origin:0 0;">PREST-BI</div><div style="position:absolute;left:451.20px;top:862.04px;font:400 12px/1 'Liberation Sans', sans-serif;letter-spacing:0.000px;white-space:nowrap;color:#808797;transform:scaleX(1.0955);transform-origin:0 0;">Prestation BI</div><div style="position:absolute;left:929.20px;top:862.04px;font:400 12px/1 'Liberation Sans', sans-serif;letter-spacing:0.000px;white-space:nowrap;color:#808797;transform:scaleX(1.0217);transform-origin:0 0;">0.50</div><div style="position:absolute;left:973.60px;top:862.04px;font:400 12px/1 'Liberation Sans', sans-serif;letter-spacing:0.000px;white-space:nowrap;color:#808797;transform:scaleX(1.0400);transform-origin:0 0;">J</div><div style="position:absolute;left:1155.00px;top:862.04px;font:400 12px/1 'Liberation Sans', sans-serif;letter-spacing:0.000px;white-space:nowrap;color:#808797;transform:scaleX(1.1333);transform-origin:0 0;">425 €</div>
</body></html>
